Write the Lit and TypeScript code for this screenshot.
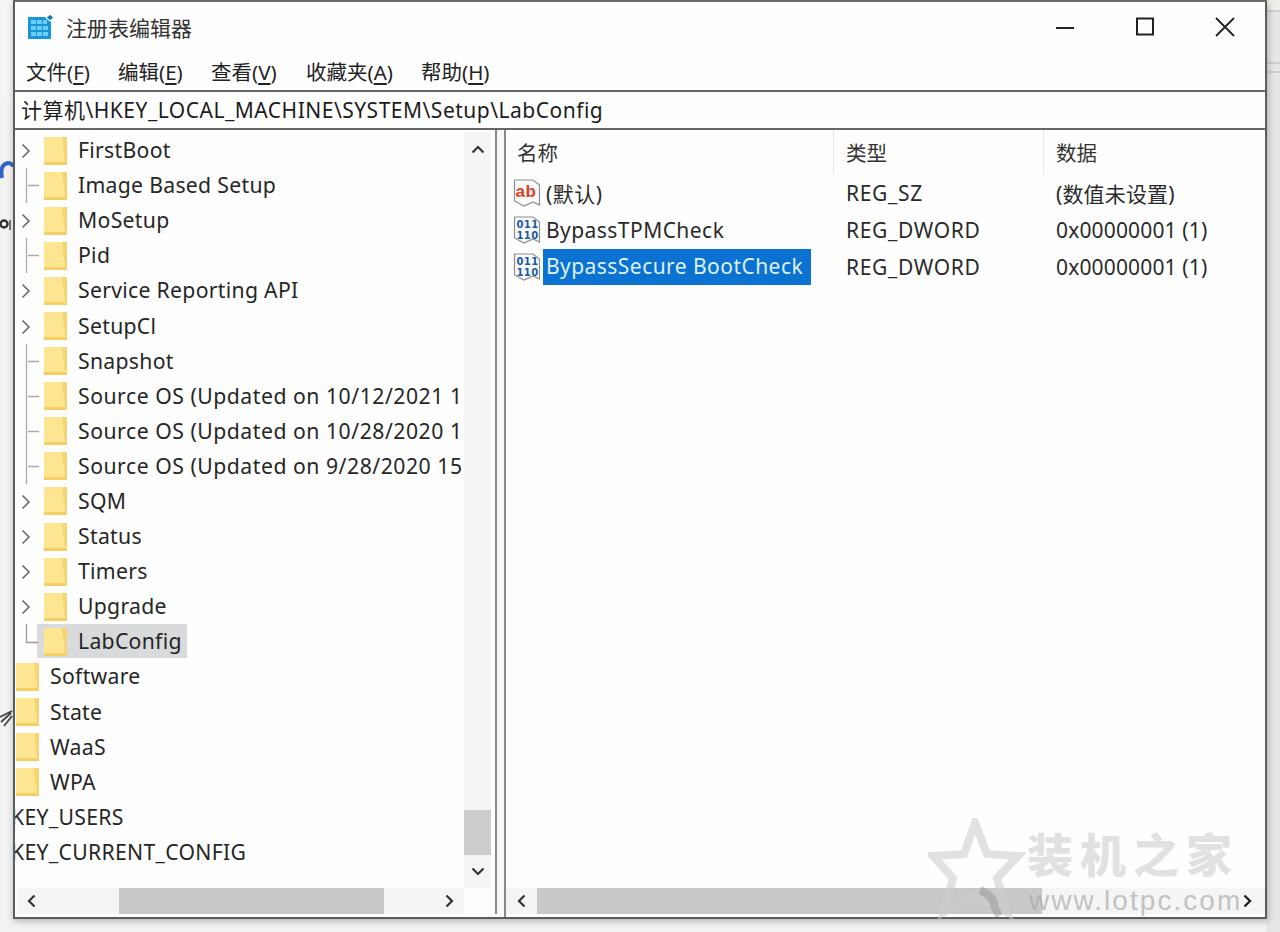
import { LitElement, html, css, svg } from "lit";
import { customElement } from "lit/decorators.js";

const chevron = (d: string, color = "#333", w = 2) => html`<svg width="16" height="16" viewBox="0 0 16 16"><path d=${d} fill="none" stroke=${color} stroke-width=${w}/></svg>`;
const LEFT = "M10.5 2.5 5 8l5.5 5.5";
const RIGHT = "M5.5 2.5 11 8l-5.5 5.5";
const UP = "M2.5 10.5 8 5l5.5 5.5";
const DOWN = "M2.5 5.5 8 11l5.5-5.5";

const folder = html`<svg class="folder" width="23" height="28" viewBox="0 0 23 28">
  <rect x="0" y="0" width="23" height="28" fill="#f7d46f"/>
  <path d="M0 0H18L21 25H0Z" fill="#fde591"/>
  <path d="M0 25H21L23 28H0Z" fill="#f6cf63"/>
</svg>`;

type Kind = "exp" | "leaf" | "last" | "root" | "none";
const rows: { t: string; k: Kind; sel?: boolean; wide?: boolean }[] = [
  { t: "FirstBoot", k: "exp" },
  { t: "Image Based Setup", k: "leaf" },
  { t: "MoSetup", k: "exp" },
  { t: "Pid", k: "leaf" },
  { t: "Service Reporting API", k: "exp" },
  { t: "SetupCl", k: "exp" },
  { t: "Snapshot", k: "leaf" },
  { t: "Source OS (Updated on 10/12/2021 1", k: "leaf", wide: true },
  { t: "Source OS (Updated on 10/28/2020 1", k: "leaf", wide: true },
  { t: "Source OS (Updated on 9/28/2020 15", k: "leaf", wide: true },
  { t: "SQM", k: "exp" },
  { t: "Status", k: "exp" },
  { t: "Timers", k: "exp" },
  { t: "Upgrade", k: "exp" },
  { t: "LabConfig", k: "last", sel: true },
  { t: "Software", k: "root" },
  { t: "State", k: "root" },
  { t: "WaaS", k: "root" },
  { t: "WPA", k: "root" },
  { t: "HKEY_USERS", k: "none" },
  { t: "HKEY_CURRENT_CONFIG", k: "none" },
];

const expander = (k: Kind) => {
  if (k === "exp") return html`<svg class="exp" width="28" height="35" viewBox="0 0 28 35"><path d="M7.500 11.500 14 18l-6.500 6.500" fill="none" stroke="#6a6a6a" stroke-width="1.600"/></svg>`;
  if (k === "leaf") return html`<svg class="exp" width="28" height="35" viewBox="0 0 28 35"><path d="M11.500 0V35M13 17.500H24" fill="none" stroke="#aaa" stroke-width="1.300"/></svg>`;
  return html`<svg class="exp" width="28" height="35" viewBox="0 0 28 35"><path d="M11.500 0V18.500H23" fill="none" stroke="#999" stroke-width="1.300"/></svg>`;
};

const regIcon = (kind: "ab" | "bin") => html`<svg class="regicon" width="28" height="30" viewBox="0 0 28 30">
  <path d="M1.500 2H20L26.500 7V27L20 24 11 28 1.500 23Z" fill="#fafafa" stroke="#8d8d8d" stroke-width="1.200"/>
  ${kind === "ab"
    ? svg`<text x="2.500" y="19" class="ab">ab</text>`
    : svg`<text x="3.500" y="13" class="bin">011</text><text x="3.500" y="24" class="bin">110</text>`}
</svg>`;

@customElement("app-root")
export class AppRoot extends LitElement {
  static styles = css`
    :host {
      display: block;
      position: relative;
      width: 1280px;
      height: 932px;
      overflow: hidden;
      background: #f2f2f2;
      font-family: "Noto Sans", "Noto Sans CJK SC", sans-serif;
      color: #1c1c1c;
    }
    .backdrop { position: absolute; left: 0; top: 0; }
    .page { padding-left: 13px; position: relative; }
    .window {
      box-sizing: border-box;
      width: 1254px;
      height: 919px;
      background: #fefefe;
      border: 2px solid #5c5c5c;
      border-top-color: #6a6a6a;
      box-shadow: 1px 2px 7px rgba(0, 0, 0, 0.28);
      display: flex;
      flex-direction: column;
    }
    .title {
      height: 44px;
      flex: none;
      box-sizing: border-box;
      padding-top: 5px;
      display: flex;
      align-items: center;
      padding-left: 13px;
    }
    .title .name { margin-left: 12px; font-size: 21px; color: #333; }
    .title .controls { margin-left: auto; display: flex; align-items: center; margin-right: 30px; gap: 60px; }
    .menu {
      height: 44px;
      flex: none;
      box-sizing: border-box;
      padding-top: 6px;
      display: flex;
      align-items: center;
      font-size: 20.500px;
      color: #222;
      padding-left: 11px;
    }
    .menu span { display: block; white-space: nowrap; }
    .menu .m1 { width: 92px; }
    .menu .m2 { width: 93px; }
    .menu .m3 { width: 95px; }
    .menu .m4 { width: 115px; }
    .menu u { text-underline-offset: 3px; }
    .address {
      flex: none;
      height: 40px;
      box-sizing: border-box;
      border-top: 2px solid #666;
      border-bottom: 2px solid #666;
      display: flex;
      align-items: center;
      padding: 0 0 2px 6px;
      font-size: 21px;
      letter-spacing: 0.500px;
      white-space: nowrap;
    }
    .body {
      flex: 1;
      min-height: 0;
      display: flex;
    }
    .tree-panel {
      flex: none;
      border-right: 2px solid #8a8a8a;
      display: grid;
      grid-template-columns: 1fr 27px;
      grid-template-rows: 1fr 26px;
      padding-right: 4px;
      margin-bottom: 3px;
      width: 476px;
    }
    .gutter { width: 7px; flex: none; border-right: 2px solid #8a8a8a; background: #f8f8f8; }
    .tree { overflow: hidden; padding-top: 3px; min-width: 0; }
    .row {
      height: 35.100px;
      display: flex;
      align-items: center;
      white-space: nowrap;
      font-size: 21.200px;
      letter-spacing: 0.300px;
      color: #262626;
    }
    .row.wide { letter-spacing: 0.520px; }
    .exp { flex: none; }
    .folder { flex: none; margin-right: 11px; }
    .row.lv2 .exp { margin-right: 1px; }
    .row.root { padding-left: 1px; }
    .row.none { margin-left: -20px; }
    .row .txt { display: block; height: 35px; line-height: 34px; }
    .row.sel { position: relative; }
    .row.sel::before {
      content: "";
      position: absolute;
      left: 22px;
      top: 0;
      width: 150px;
      height: 34px;
      background: #d9dadb;
    }
    .row.sel > * { position: relative; }
    .vbar {
      background: #f5f5f5;
      display: flex;
      flex-direction: column;
      align-items: center;
      padding-top: 10px;
      padding-bottom: 9px;
      margin-top: 2px;
    }
    .vbar .track { flex: 1; width: 100%; display: flex; flex-direction: column; justify-content: flex-end; padding-bottom: 8px; }
    .vbar .thumb { height: 45px; background: #cdcdcd; }
    .hbar {
      background: #f5f5f5;
      display: flex;
      align-items: center;
      height: 26px;
    }
    .hbar.left { grid-column: 1 / span 2; margin-right: 27px; padding: 0 7px; margin-left: 2px; }
    .hbar .track { flex: 1; height: 100%; display: flex; }
    .hbar .pre { flex: none; }
    .hbar .thumb { background: #c8c8c8; height: 100%; flex: none; }
    .list-panel {
      flex: 1;
      min-width: 0;
      display: flex;
      flex-direction: column;
    }
    .list-head {
      height: 44px;
      flex: none;
      display: grid;
      grid-template-columns: 328px 210px 1fr;
      font-size: 20.500px;
      color: #333;
    }
    .list-head div {
      padding-left: 12px;
      display: flex;
      align-items: center;
      height: 44px;
      border-right: 1px solid #e6e6e6;
    }
    .list-head div:first-child { padding-left: 11px; }
    .list-head div:last-child { border-right: none; }
    .list-body { flex: 1; }
    .item {
      height: 37px;
      display: grid;
      grid-template-columns: 328px 210px 1fr;
      align-items: center;
      font-size: 21px;
      letter-spacing: 0.450px;
      white-space: nowrap;
      color: #2a2a2a;
    }
    .item .first { display: flex; align-items: center; padding-left: 7px; }
    .item .pad { padding-left: 3px; }
    .item .second { padding-left: 12px; letter-spacing: 0.650px; }
    .item .third { padding-left: 12px; letter-spacing: 0.150px; }
    .regicon { flex: none; margin-right: 2px; }
    .ab { font: 800 17px "Liberation Sans", sans-serif; fill: #de3f22; }
    .bin { font: 700 10px "DejaVu Sans", sans-serif; fill: #1a5aa6; letter-spacing: 0.400px; }
    .sel-text {
      display: block;
      background: #0b72d2;
      color: #dff1ff;
      height: 36px;
      line-height: 35px;
      padding: 0 8px 0 3px;
    }
    .hbar.right { margin-bottom: 3px; padding: 0 10px 0 8px; }
    .mark {
      position: absolute;
      left: 928px;
      top: 818px;
      width: 330px;
      height: 105px;
      pointer-events: none;
    }
    .mark svg { position: absolute; left: 0; top: 0; }
    .mark .cn {
      position: absolute;
      left: 99px;
      top: 1px;
      font: 900 46px "Noto Sans CJK SC", sans-serif;
      letter-spacing: 7px;
      color: rgba(200, 200, 200, 0.55);
      white-space: nowrap;
    }
    .mark .url {
      position: absolute;
      left: 101px;
      top: 67px;
      font: 400 28px "Liberation Sans", sans-serif;
      letter-spacing: 2.050px;
      color: rgba(170, 170, 170, 0.7);
      white-space: nowrap;
    }
  `;

  render() {
    return html`
      <svg class="backdrop" width="1280" height="932" viewBox="0 0 1280 932">
        <rect x="1266" y="0" width="14" height="932" fill="#e6e6e6"/>
        <rect x="1266" y="0" width="14" height="10" fill="#efefea"/>
        <path d="M1266 11H1280M1266 63H1280M1266 72H1280" stroke="#c8c8c8" stroke-width="1.500"/>
        <rect x="0" y="0" width="13" height="100" fill="#f4f4f4"/>
        <path d="M2 178C0 168 3 164 8 163 11 163 13 165 13 167" fill="none" stroke="#2f64c8" stroke-width="4"/>
        <circle cx="4" cy="224" r="3.500" fill="none" stroke="#333" stroke-width="2.500"/>
        <path d="M10 220V230" stroke="#777" stroke-width="2"/>
        <path d="M0 717 12 711M1 722 11 713M4 726 12 716" stroke="#444" stroke-width="1.800"/>
      </svg>
      <div class="page">
        <div class="window">
          <div class="title">
            <svg width="26" height="25" viewBox="0 0 26 25">
              <rect x="0" y="3" width="23" height="22" fill="#1496d8"/>
              <g fill="#6fcdf4">
                <rect x="3" y="6" width="5" height="4"/><rect x="9" y="6" width="5" height="4"/><rect x="15" y="6" width="4" height="4"/>
                <rect x="3" y="12" width="5" height="4"/><rect x="9" y="12" width="5" height="4"/><rect x="15" y="12" width="5" height="4"/>
                <rect x="3" y="18" width="5" height="4"/><rect x="9" y="18" width="5" height="4"/><rect x="15" y="18" width="5" height="4"/>
              </g>
              <path d="M22 0l4 3.500-4 3.500-4-3.500z" fill="#1678b8" stroke="#fff" stroke-width="1.200"/>
            </svg>
            <span class="name">注册表编辑器</span>
            <div class="controls">
              <svg width="20" height="20" viewBox="0 0 20 20"><path d="M1 11H19" stroke="#222" stroke-width="2"/></svg>
              <svg width="20" height="20" viewBox="0 0 20 20"><rect x="2" y="1.500" width="16" height="16" fill="none" stroke="#222" stroke-width="2"/></svg>
              <svg width="20" height="20" viewBox="0 0 20 20"><path d="M1 1 19 19M19 1 1 19" stroke="#222" stroke-width="1.800"/></svg>
            </div>
          </div>
          <div class="menu">
            <span class="m1">文件(<u>F</u>)</span>
            <span class="m2">编辑(<u>E</u>)</span>
            <span class="m3">查看(<u>V</u>)</span>
            <span class="m4">收藏夹(<u>A</u>)</span>
            <span>帮助(<u>H</u>)</span>
          </div>
          <div class="address">计算机\\HKEY_LOCAL_MACHINE\\SYSTEM\\Setup\\LabConfig</div>
          <div class="body">
            <div class="tree-panel">
              <div class="tree">
                ${rows.map((r) => {
                  if (r.k === "none") return html`<div class="row none"><span class="txt">${r.t}</span></div>`;
                  if (r.k === "root") return html`<div class="row root">${folder}<span class="txt">${r.t}</span></div>`;
                  return html`<div class="row lv2 ${r.sel ? "sel" : ""} ${r.wide ? "wide" : ""}">${expander(r.k)}${folder}<span class="txt">${r.t}</span></div>`;
                })}
              </div>
              <div class="vbar">
                ${chevron(UP, "#333", 2.200)}
                <div class="track"><div class="thumb"></div></div>
                ${chevron(DOWN, "#333", 2.200)}
              </div>
              <div class="hbar left">
                ${chevron(LEFT, "#333", 2.200)}
                <div class="track"><div class="pre" style="width:79px"></div><div class="thumb" style="width:265px"></div></div>
                ${chevron(RIGHT, "#333", 2.200)}
              </div>
            </div>
            <div class="gutter"></div>
            <div class="list-panel">
              <div class="list-head"><div>名称</div><div>类型</div><div>数据</div></div>
              <div class="list-body">
                <div class="item">
                  <div class="first">${regIcon("ab")}<span class="pad">(默认)</span></div>
                  <div class="second">REG_SZ</div>
                  <div class="third">(数值未设置)</div>
                </div>
                <div class="item">
                  <div class="first">${regIcon("bin")}<span class="pad">BypassTPMCheck</span></div>
                  <div class="second">REG_DWORD</div>
                  <div class="third">0x00000001 (1)</div>
                </div>
                <div class="item">
                  <div class="first">${regIcon("bin")}<span class="sel-text">BypassSecure BootCheck</span></div>
                  <div class="second">REG_DWORD</div>
                  <div class="third">0x00000001 (1)</div>
                </div>
              </div>
              <div class="hbar right">
                ${chevron(LEFT, "#333", 2.200)}
                <div class="track"><div class="pre" style="width:7px"></div><div class="thumb" style="width:505px"></div></div>
                ${chevron(RIGHT, "#222", 2.400)}
              </div>
            </div>
          </div>
        </div>
      </div>
      <div class="mark">
        <svg width="100" height="105" viewBox="0 0 100 105">
          <path d="M47 5 59 36 90 38 69 60 79 94 47 77 16 94 25 60 5 38 36 36Z" fill="none" stroke="rgba(205,205,205,0.6)" stroke-width="8" stroke-linejoin="miter"/>
          <path d="M52 72c10 4 14 10 15 18l4 8" fill="none" stroke="rgba(150,150,150,0.5)" stroke-width="8"/>
        </svg>
        <span class="cn">装机之家</span>
        <span class="url">www.lotpc.com</span>
      </div>
    `;
  }
}
